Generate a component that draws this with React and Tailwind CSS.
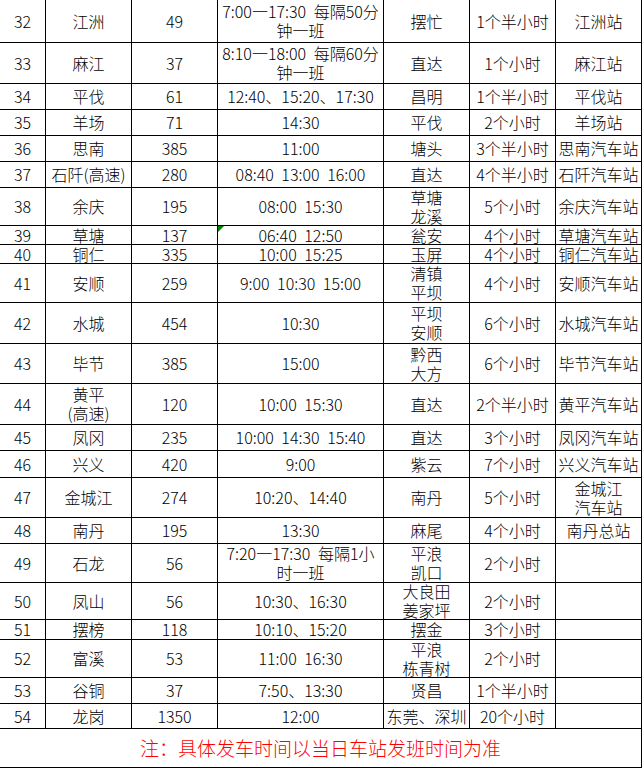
import React from "react";

const rows = [
  ["h-[43px]", "32", "江洲", "49", ["7:00一17:30 每隔50分", "钟一班"], "摆忙", "1个半小时", "江洲站"],
  ["h-[41px]", "33", "麻江", "37", ["8:10一18:00 每隔60分", "钟一班"], "直达", "1个小时", "麻江站"],
  ["h-[26px]", "34", "平伐", "61", "12:40、15:20、17:30", "昌明", "1个半小时", "平伐站"],
  ["h-[26px]", "35", "羊场", "71", "14:30", "平伐", "2个小时", "羊场站"],
  ["h-[26px]", "36", "思南", "385", "11:00", "塘头", "3个半小时", "思南汽车站"],
  ["h-[26px]", "37", "石阡(高速)", "280", "08:40 13:00 16:00", "直达", "4个半小时", "石阡汽车站"],
  ["h-[38px]", "38", "余庆", "195", "08:00 15:30", ["草塘", "龙溪"], "5个小时", "余庆汽车站"],
  ["h-[19px]", "39", "草塘", "137", "06:40 12:50", "瓮安", "4个小时", "草塘汽车站", true],
  ["h-[19px]", "40", "铜仁", "335", "10:00 15:25", "玉屏", "4个小时", "铜仁汽车站"],
  ["h-[39px]", "41", "安顺", "259", "9:00 10:30 15:00", ["清镇", "平坝"], "4个小时", "安顺汽车站"],
  ["h-[41px]", "42", "水城", "454", "10:30", ["平坝", "安顺"], "6个小时", "水城汽车站"],
  ["h-[40px]", "43", "毕节", "385", "15:00", ["黔西", "大方"], "6个小时", "毕节汽车站"],
  ["h-[41px]", "44", ["黄平", "(高速)"], "120", "10:00 15:30", "直达", "2个半小时", "黄平汽车站"],
  ["h-[26px]", "45", "凤冈", "235", "10:00 14:30 15:40", "直达", "3个小时", "凤冈汽车站"],
  ["h-[27px]", "46", "兴义", "420", "9:00", "紫云", "7个小时", "兴义汽车站"],
  ["h-[40px]", "47", "金城江", "274", "10:20、14:40", "南丹", "5个小时", ["金城江", "汽车站"]],
  ["h-[26px]", "48", "南丹", "195", "13:30", "麻尾", "4个小时", "南丹总站"],
  ["h-[39px]", "49", "石龙", "56", ["7:20一17:30 每隔1小", "时一班"], ["平浪", "凯口"], "2个小时", ""],
  ["h-[37px]", "50", "凤山", "56", "10:30、16:30", ["大良田", "姜家坪"], "2个小时", ""],
  ["h-[20px]", "51", "摆榜", "118", "10:10、15:20", "摆金", "3个小时", ""],
  ["h-[38px]", "52", "富溪", "53", "11:00 16:30", ["平浪", "栋青树"], "2个小时", ""],
  ["h-[26px]", "53", "谷铜", "37", "7:50、13:30", "贤昌", "1个半小时", ""],
  ["h-[25px]", "54", "龙岗", "1350", "12:00", "东莞、深圳", "20个小时", ""],
];

function Content({ v }) {
  if (Array.isArray(v)) {
    return (
      <div>
        {v.map((l, i) => (
          <div key={i}>{l}</div>
        ))}
      </div>
    );
  }
  return <span>{v}</span>;
}

export default function App() {
  return (
    <div className="w-[642px] h-[768px] overflow-hidden bg-white text-black font-['Noto_Sans_CJK_SC',sans-serif] font-light text-[16px]">
      <div className="grid grid-cols-[46px_86px_86px_166px_86px_86px_86px]">
        {rows.map((r) => {
          const [h, ...rest] = r;
          const cells = rest.slice(0, 7);
          const mark = rest[7];
          return cells.map((c, i) => (
            <div
              key={r[1] + "-" + i}
              className={`relative flex items-center justify-center text-center whitespace-nowrap leading-[19px] border-r border-b border-black ${h} ${i === 3 ? "[word-spacing:4px]" : ""}`}
            >
              {mark && i === 3 && (
                <svg className="absolute left-0 top-0" width="6" height="6" viewBox="0 0 6 6">
                  <polygon points="0,0 6,0 0,6" fill="#008000" />
                </svg>
              )}
              <Content v={c} />
            </div>
          ));
        })}
        <div className="col-span-7 h-[39px] flex items-center justify-center border-r border-b border-black text-[19px] leading-[24px] text-[#ff0000]">
          注：具体发车时间以当日车站发班时间为准
        </div>
      </div>
    </div>
  );
}
